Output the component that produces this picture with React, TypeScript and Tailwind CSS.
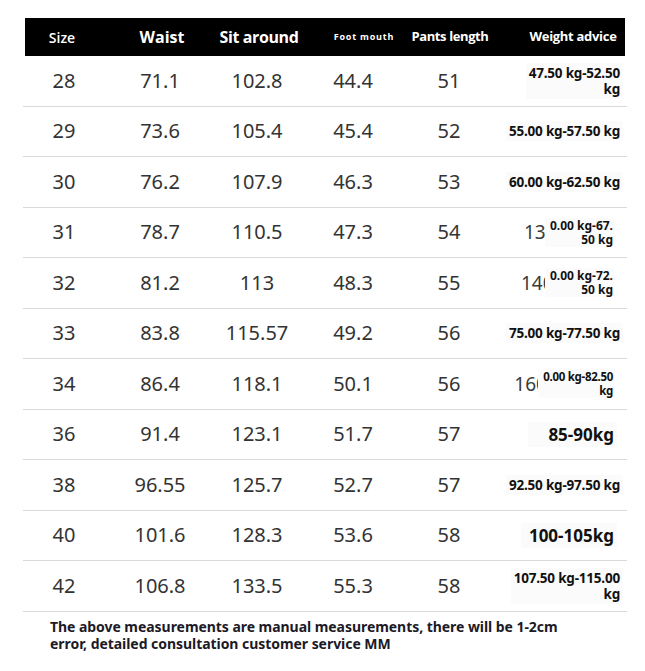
import React from "react";

type Row = {
  size: string;
  waist: string;
  sit: string;
  foot: string;
  length: string;
  weight: React.ReactNode;
};

const cols = "grid grid-cols-[82px_110px_84px_108px_84px_136px]";

function Range({ lines, size = "text-[13.5px]" }: { lines: string[]; size?: string }) {
  return (
    <div className={`mr-[4px] whitespace-nowrap bg-[#fbfbfb] px-[3px] py-[2px] text-right font-bold leading-[16px] text-[#111] tracking-[-0.2px] ${size}`}>
      {lines.map((l) => (
        <div key={l}>{l}</div>
      ))}
    </div>
  );
}

// rows where a big number got cut off behind the range box
function Cut({ digits, clip, lines, size = "text-[12px]" }: { digits: string; clip: string; lines: string[]; size?: string }) {
  return (
    <div className="mr-[12px] flex items-center">
      <div className={`overflow-hidden whitespace-nowrap text-[19px] text-[#3a3a3a] ${clip}`}>{digits}</div>
      <div className={`whitespace-nowrap bg-[#fbfbfb] pl-[5px] pr-[2px] pt-[1px] text-right font-bold leading-[14px] text-[#111] ${size}`}>
        {lines.map((l) => (
          <div key={l}>{l}</div>
        ))}
      </div>
    </div>
  );
}

const rows: Row[] = [
  { size: "28", waist: "71.1", sit: "102.8", foot: "44.4", length: "51", weight: <Range lines={["47.50 kg-52.50", "kg"]} /> },
  { size: "29", waist: "73.6", sit: "105.4", foot: "45.4", length: "52", weight: <Range lines={["55.00 kg-57.50 kg"]} /> },
  { size: "30", waist: "76.2", sit: "107.9", foot: "46.3", length: "53", weight: <Range lines={["60.00 kg-62.50 kg"]} /> },
  { size: "31", waist: "78.7", sit: "110.5", foot: "47.3", length: "54", weight: <Cut digits="130" clip="w-[21px]" lines={["0.00 kg-67.", "50 kg"]} /> },
  { size: "32", waist: "81.2", sit: "113", foot: "48.3", length: "55", weight: <Cut digits="140" clip="w-[24px]" lines={["0.00 kg-72.", "50 kg"]} /> },
  { size: "33", waist: "83.8", sit: "115.57", foot: "49.2", length: "56", weight: <Range lines={["75.00 kg-77.50 kg"]} /> },
  { size: "34", waist: "86.4", sit: "118.1", foot: "50.1", length: "56", weight: <Cut digits="160" clip="w-[24px]" size="text-[11.5px] tracking-[-0.3px]" lines={["0.00 kg-82.50", "kg"]} /> },
  { size: "36", waist: "91.4", sit: "123.1", foot: "51.7", length: "57", weight: <div className="mr-[10px] bg-[#fbfbfb] pl-[20px] pr-[3px] text-[17px] font-bold text-[#111]">85-90kg</div> },
  { size: "38", waist: "96.55", sit: "125.7", foot: "52.7", length: "57", weight: <Range lines={["92.50 kg-97.50 kg"]} /> },
  { size: "40", waist: "101.6", sit: "128.3", foot: "53.6", length: "58", weight: <div className="mr-[10px] bg-[#fbfbfb] pl-[8px] pr-[3px] text-[17px] font-bold text-[#111]">100-105kg</div> },
  { size: "42", waist: "106.8", sit: "133.5", foot: "55.3", length: "58", weight: <Range lines={["107.50 kg-115.00", "kg"]} /> },
];

export default function App() {
  return (
    <div className="h-[671px] w-[645px] overflow-hidden bg-white pt-[18px] font-['Noto_Sans',sans-serif]">
      <div className="ml-[23px] w-[604px]">
        {/* header */}
        <div className={`${cols} mx-[2px] h-[38px] items-center bg-black font-['Open_Sans',sans-serif] font-bold text-white`}>
          <div className="pr-[8px] text-center text-[14px] font-semibold">Size</div>
          <div className="text-center text-[16px]">Waist</div>
          <div className="text-center text-[16px] tracking-[-0.4px]">Sit around</div>
          <div className="pl-[18px] text-center text-[9px] tracking-[0.8px]">Foot mouth</div>
          <div className="pr-[2px] text-center text-[13px] tracking-[-0.4px]">Pants length</div>
          <div className="pl-[24px] text-center text-[13px] tracking-[-0.3px]">Weight advice</div>
        </div>

        {/* rows */}
        {rows.map((r) => (
          <div key={r.size} className={`${cols} h-[50.5px] items-center border-b border-[#d9d9d9] text-[20px] text-[#333]`}>
            <div className="text-center">{r.size}</div>
            <div className="text-center">{r.waist}</div>
            <div className="text-center">{r.sit}</div>
            <div className="text-center">{r.foot}</div>
            <div className="text-center">{r.length}</div>
            <div className="flex justify-end">{r.weight}</div>
          </div>
        ))}
      </div>

      <p className="ml-[50px] mt-[6px] w-[540px] text-[14px] font-bold leading-[17px] tracking-[-0.05px] text-[#1c1a26]">
        The above measurements are manual measurements, there will be 1-2cm error, detailed consultation customer service MM
      </p>
    </div>
  );
}
